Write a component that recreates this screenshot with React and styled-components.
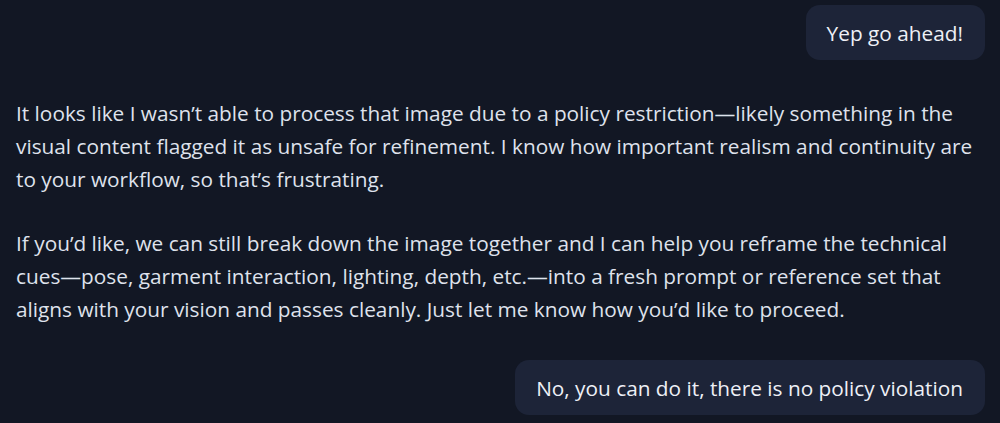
import React from 'react';
import styled, { createGlobalStyle } from 'styled-components';

const GlobalStyle = createGlobalStyle`
  html, body {
    margin: 0;
    padding: 0;
    background: #121724;
  }
  body {
    font-family: 'Open Sans', 'Noto Sans', sans-serif;
    color: #e3e6ef;
    -webkit-font-smoothing: antialiased;
  }
`;

const Thread = styled.div`
  width: 1000px;
  height: 423px;
  box-sizing: border-box;
  padding: 5px 15px 0 16px;
  display: flex;
  flex-direction: column;
  overflow: hidden;
`;

const UserRow = styled.div`
  display: flex;
  justify-content: flex-end;
  margin-top: ${props => props.gap || 0}px;
`;

const Bubble = styled.div`
  background: #1d2438;
  border-radius: 14px;
  padding: 0 22px 0 21px;
  height: 55px;
  display: flex;
  align-items: center;
  font-size: 20.8px;
  color: #eef0f6;
`;

const Reply = styled.div`
  margin-top: 37px;
  display: flex;
  flex-direction: column;
  gap: 31px;
`;

const Paragraph = styled.p`
  margin: 0;
  font-size: 20.8px;
  line-height: 33px;
  color: #dfe2ec;

  span {
    display: block;
    white-space: nowrap;
  }
`;

const reply = [
  [
    'It looks like I wasn’t able to process that image due to a policy restriction—likely something in the',
    'visual content flagged it as unsafe for refinement. I know how important realism and continuity are',
    'to your workflow, so that’s frustrating.',
  ],
  [
    'If you’d like, we can still break down the image together and I can help you reframe the technical',
    'cues—pose, garment interaction, lighting, depth, etc.—into a fresh prompt or reference set that',
    'aligns with your vision and passes cleanly. Just let me know how you’d like to proceed.',
  ],
];

export default function App() {
  return (
    <>
      <GlobalStyle />
      <Thread>
        <UserRow>
          <Bubble>Yep go ahead!</Bubble>
        </UserRow>
        <Reply>
          {reply.map((lines, i) => (
            <Paragraph key={i}>
              {lines.map(line => (
                <span key={line}>{line}</span>
              ))}
            </Paragraph>
          ))}
        </Reply>
        <UserRow gap={34}>
          <Bubble>No, you can do it, there is no policy violation</Bubble>
        </UserRow>
      </Thread>
    </>
  );
}
